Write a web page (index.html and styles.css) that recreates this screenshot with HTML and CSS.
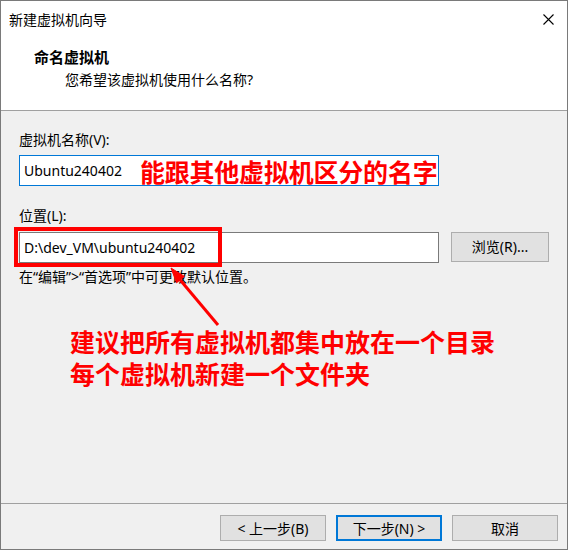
FILE: index.html
```html
<!DOCTYPE html>
<html lang="zh">
<head>
<meta charset="utf-8">
<title>新建虚拟机向导</title>
<link rel="stylesheet" href="styles.css">
</head>
<body>
<div class="window">
  <div class="titlebar">
    <span class="title">新建虚拟机向导</span>
    <span class="close">
      <svg width="11" height="11" viewBox="0 0 11 11"><path d="M0.5 0.5 L10.5 10.5 M10.5 0.5 L0.5 10.5" stroke="#000" stroke-width="1.1" fill="none"/></svg>
    </span>
  </div>
  <div class="header">
    <div class="heading">命名虚拟机</div>
    <div class="subtitle">您希望该虚拟机使用什么名称?</div>
  </div>
  <div class="content">
    <div class="label">虚拟机名称(V):</div>
    <div class="field focused">
      <span class="value">Ubuntu240402</span>
      <span class="note-inline">能跟其他虚拟机区分的名字</span>
    </div>
    <div class="label second">位置(L):</div>
    <div class="row">
      <div class="field plain"><span class="value">D:\dev_VM\ubuntu240402</span></div>
      <div class="btn browse">浏览(R)...</div>
    </div>
    <div class="hint">在“编辑”&gt;“首选项”中可更改默认位置。</div>

    <div class="redbox"></div>
    <svg class="arrow" width="80" height="80" viewBox="0 0 80 80">
      <path d="M12 12 L54 62" stroke="#ff0000" stroke-width="3" fill="none"/>
      <path d="M7 5 L20.4 13.4 L12.6 19.8 Z" fill="#ff0000" stroke="#ff0000" stroke-width="1" stroke-linejoin="miter"/>
    </svg>
    <div class="note-big">
      <div>建议把所有虚拟机都集中放在一个目录</div>
      <div>每个虚拟机新建一个文件夹</div>
    </div>
  </div>
  <div class="footer">
    <div class="btn">&lt; 上一步(B)</div>
    <div class="btn default">下一步(N) &gt;</div>
    <div class="btn">取消</div>
  </div>
</div>
</body>
</html>
```

FILE: styles.css
```css
html, body {
  margin: 0;
  padding: 0;
  background: #ffffff;
}
body {
  font-family: "Noto Sans", "Noto Sans CJK SC", sans-serif;
  font-size: 14px;
  color: #000;
}
.window {
  width: 568px;
  height: 550px;
  box-sizing: border-box;
  border: 1px solid #7a7a7a;
  display: flex;
  flex-direction: column;
  background: #ffffff;
}
.titlebar {
  height: 37px;
  display: flex;
  align-items: center;
  justify-content: space-between;
  padding-left: 8px;
  padding-right: 13px;
  line-height: 20px;
}
.close {
  display: flex;
  width: 11px;
  height: 11px;
}
.header {
  padding: 9px 0 20px 33px;
  border-bottom: 1px solid #a0a0a0;
  line-height: 20px;
}
.heading {
  font-weight: bold;
  font-size: 15px;
}
.subtitle {
  margin-top: 3px;
  padding-left: 31px;
}
.content {
  flex: 1;
  background: #f0f0f0;
  padding: 19px 0 0 18px;
  position: relative;
  line-height: 20px;
}
.label.second {
  margin-top: 20px;
}
.field {
  margin-top: 5px;
  width: 420px;
  height: 31px;
  box-sizing: border-box;
  background: #fff;
  display: flex;
  align-items: center;
  padding-left: 4px;
  border: 1px solid #7a7a7a;
}
.field.focused {
  border-color: #0078d7;
}
.row {
  display: flex;
  align-items: flex-start;
  gap: 12px;
  margin-top: 6px;
}
.row .field {
  margin-top: 0;
}
.note-inline {
  margin-left: 18px;
  color: #ff0000;
  font-weight: bold;
  font-size: 25px;
  font-family: "Noto Sans CJK SC", sans-serif;
  line-height: 28px;
  letter-spacing: -0.2px;
}
.btn {
  height: 26px;
  box-sizing: border-box;
  border: 1px solid #adadad;
  background: #e1e1e1;
  display: flex;
  align-items: center;
  justify-content: center;
}
.browse {
  width: 98px;
  height: 30px;
}
.hint {
  margin-top: 4px;
}
.redbox {
  position: absolute;
  left: 13px;
  top: 116px;
  width: 208px;
  height: 40px;
  box-sizing: border-box;
  border: 4px solid #ff0000;
}
.arrow {
  position: absolute;
  left: 163px;
  top: 152px;
}
.note-big {
  position: absolute;
  left: 69px;
  top: 214px;
  color: #ff0000;
  font-weight: bold;
  font-size: 25px;
  line-height: 32px;
  font-family: "Noto Sans CJK SC", sans-serif;
}
.footer {
  height: 46px;
  box-sizing: border-box;
  background: #f0f0f0;
  border-top: 1px solid #a0a0a0;
  display: flex;
  justify-content: flex-end;
  align-items: flex-start;
  gap: 10px;
  padding: 11px 9px 0 0;
}
.footer .btn {
  width: 106px;
}
.footer .btn.default {
  border: 2px solid #0078d7;
}
```
